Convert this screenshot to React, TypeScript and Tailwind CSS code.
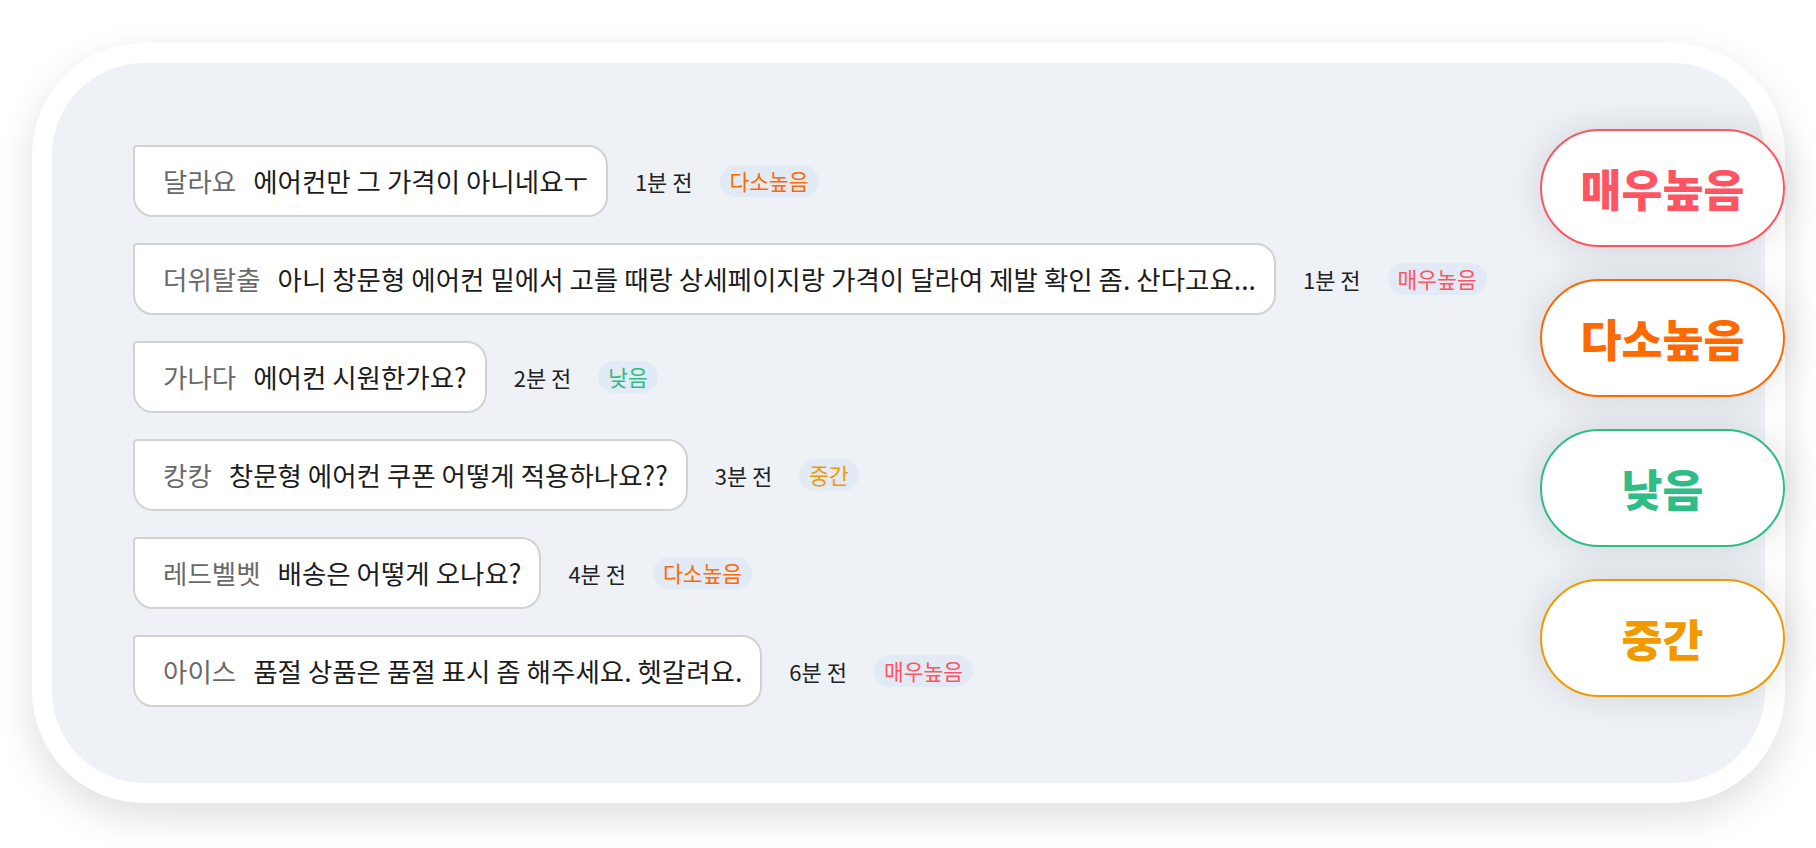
const FONT = { fontFamily: '"Noto Sans CJK KR", "Noto Sans", sans-serif' };

type Level = "매우높음" | "다소높음" | "낮음" | "중간";

const LEVEL_TEXT: Record<Level, string> = {
  매우높음: "text-[#ff5562]",
  다소높음: "text-[#ff6a00]",
  낮음: "text-[#2fbd86]",
  중간: "text-[#f09a00]",
};

const comments: { name: string; text: string; time: string; level: Level }[] = [
  { name: "달라요", text: "에어컨만 그 가격이 아니네요ㅜ", time: "1분 전", level: "다소높음" },
  {
    name: "더위탈출",
    text: "아니 창문형 에어컨 밑에서 고를 때랑 상세페이지랑 가격이 달라여 제발 확인 좀. 산다고요...",
    time: "1분 전",
    level: "매우높음",
  },
  { name: "가나다", text: "에어컨 시원한가요?", time: "2분 전", level: "낮음" },
  { name: "캉캉", text: "창문형 에어컨 쿠폰 어떻게 적용하나요??", time: "3분 전", level: "중간" },
  { name: "레드벨벳", text: "배송은 어떻게 오나요?", time: "4분 전", level: "다소높음" },
  { name: "아이스", text: "품절 상품은 품절 표시 좀 해주세요. 헷갈려요.", time: "6분 전", level: "매우높음" },
];

function CommentRow({ c }: { c: (typeof comments)[number] }) {
  return (
    <div className="flex items-center gap-[27px]">
      <div className="flex h-[72px] items-center gap-[17px] rounded-[20px] rounded-tl-[4px] border-2 border-[#d2d2d2] bg-white pl-[28px] pr-[18px] text-[26.5px] leading-none">
        <span className="text-[#6a6a6a]">{c.name}</span>
        <span className="text-[#1c1c1c]">{c.text}</span>
      </div>
      <span className="text-[22px] leading-none text-[#222]">{c.time}</span>
      <span
        className={`flex h-[32px] items-center rounded-full bg-[#e1eaf5] px-[10px] text-[21.5px] leading-none ${LEVEL_TEXT[c.level]}`}
      >
        {c.level}
      </span>
    </div>
  );
}

const pills: { label: Level; cls: string }[] = [
  { label: "매우높음", cls: "border-[#ff5562] text-[#ff5562]" },
  { label: "다소높음", cls: "border-[#ff6a00] text-[#ff6a00]" },
  { label: "낮음", cls: "border-[#2fbd86] text-[#2fbd86]" },
  { label: "중간", cls: "border-[#f09a00] text-[#f09a00]" },
];

export default function App() {
  return (
    <div className="min-h-screen bg-white pl-[32px] pr-[31px] pt-[43px]" style={FONT}>
      <div className="h-[760px] rounded-[112px] bg-white p-[20px] shadow-[0_14px_40px_rgba(0,0,0,0.13)]">
        <div className="flex h-full rounded-[92px] bg-[#eef2f7] pl-[81px] pt-[66px]">
          {/* comment feed */}
          <div className="mt-[16px] flex flex-col gap-[26px]">
            {comments.map((c) => (
              <CommentRow key={c.name} c={c} />
            ))}
          </div>

          {/* level filter pills, sticking out over the card border */}
          <div className="ml-auto mr-[-20px] flex flex-col gap-[32px]">
            {pills.map((p) => (
              <div
                key={p.label}
                className={`flex h-[118px] w-[245px] items-center justify-center rounded-full border-2 bg-white text-[44.5px] font-black leading-none shadow-[0_0_40px_rgba(0,0,0,0.12)] ${p.cls}`}
              >
                {p.label}
              </div>
            ))}
          </div>
        </div>
      </div>
    </div>
  );
}
